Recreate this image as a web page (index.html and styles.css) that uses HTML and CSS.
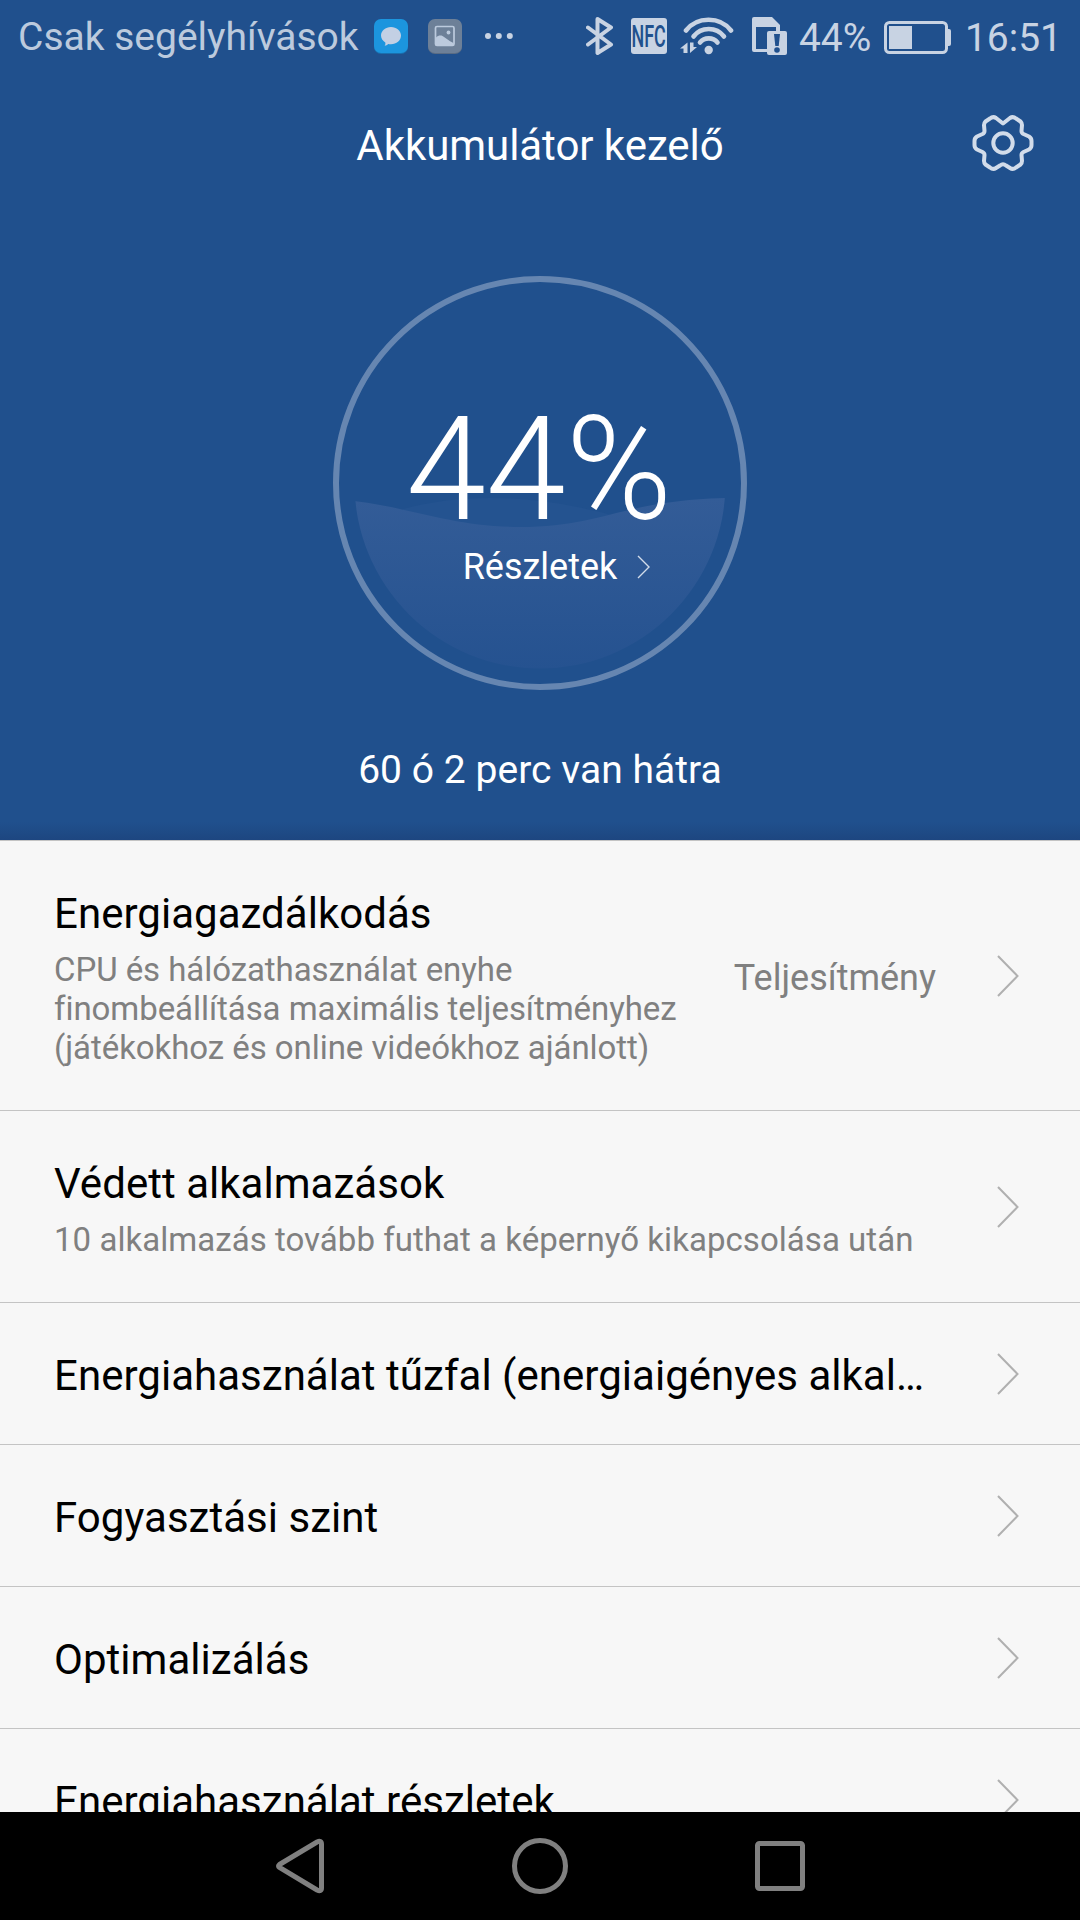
FILE: index.html
```html
<!DOCTYPE html>
<html lang="hu">
<head>
  <meta charset="UTF-8">
  <meta name="viewport" content="width=device-width, initial-scale=1.0">
  <title>Akkumulátor kezelő</title>
  <link rel="stylesheet" href="styles.css">
</head>
<body>
  <section class="top">
    <div class="status">
      <span class="carrier">Csak segélyhívások</span>
      <svg class="ic-app" width="34" height="35" viewBox="0 0 34 35">
        <rect y="1" width="34" height="34" rx="7" fill="#1a6fae"/>
        <rect width="34" height="34" rx="7" fill="#1c95de"/>
        <path d="M17 8c5.500 0 10 3.600 10 8.600s-4.500 8.700-10 8.700c-1 0-2-.1-2.900-.4-.9.900-2 1.600-3.400 1.800.6-.9.900-2.100.6-3.300C8.700 22 7 19.500 7 16.600 7 11.600 11.500 8 17 8z" fill="#c3d0e4"/>
      </svg>
      <svg class="ic-pic" width="34" height="35" viewBox="0 0 34 35">
        <rect y="1" width="34" height="34" rx="7" fill="#5a6c84"/>
        <rect width="34" height="34" rx="7" fill="#6d8098"/>
        <rect x="7.500" y="7.500" width="18.500" height="19" rx="1.500" fill="none" stroke="#bccadd" stroke-width="1.700"/>
        <circle cx="20.500" cy="13.500" r="1.900" fill="#bccadd"/>
        <path d="M8 18.500c2-2 4.500-2.500 6.500-1.500 3 1.600 6 5 11 7V26.500H8z" fill="#bccadd"/>
      </svg>
      <svg class="ic-dots" width="30" height="8" viewBox="0 0 30 8">
        <g fill="#c8d3e3"><circle cx="4" cy="4" r="3"/><circle cx="14.800" cy="4" r="3"/><circle cx="25.800" cy="4" r="3"/></g>
      </svg>
      <span class="spacer"></span>
      <svg class="ic-bt" width="28" height="38" viewBox="0 0 28 38">
        <path d="M2 10.500L25 27.500 11.500 36V2L25 10.500 2 27.500" fill="none" stroke="#c8d3e3" stroke-width="4" stroke-linejoin="round" stroke-linecap="round"/>
      </svg>
      <span class="nfc"><b>NFC</b></span>
      <svg class="ic-wifi" width="54" height="38" viewBox="0 0 54 38">
        <g fill="none" stroke="#c8d3e3" stroke-width="4.600" stroke-linecap="round">
          <path d="M6 13.500C17-.8 40-.8 51 13.500"/>
          <path d="M13.500 19.500C21 9.500 36.500 9.500 44 19.500"/>
          <path d="M20 25.500c4.500-5.500 13-5.500 17.500 0"/>
        </g>
        <circle cx="28.700" cy="33" r="4.200" fill="#c8d3e3"/>
        <path d="M7.500 25.500V36H3.500V31.500H0zM10 25.500h3.500V30H17L10 36z" fill="#c8d3e3"/>
      </svg>
      <svg class="ic-sim" width="35" height="38" viewBox="0 0 35 38">
        <path fill-rule="evenodd" d="M2 0h18l8 8v14H24V10H4v22h12v3H2a2 2 0 0 1-2-2V2a2 2 0 0 1 2-2z" fill="#c8d3e3"/>
        <rect x="15" y="14" width="20" height="24" rx="2" fill="#c8d3e3"/>
        <path d="M22 17h6l-1.300 12h-3.400z" fill="#20508d"/>
        <circle cx="25" cy="33" r="2.800" fill="#20508d"/>
      </svg>
      <span class="level">44%</span>
      <svg class="ic-bat" width="67" height="33" viewBox="0 0 67 33">
        <rect x="1.500" y="1.500" width="61" height="30" rx="4" fill="none" stroke="#c8d3e3" stroke-width="3"/>
        <rect x="5" y="5" width="23" height="23" fill="#c8d3e3"/>
        <path d="M63 8h2a2 2 0 0 1 2 2v13a2 2 0 0 1-2 2h-2z" fill="#c8d3e3"/>
      </svg>
      <span class="clock">16:51</span>
    </div>

    <header class="header">
      <h1>Akkumulátor kezelő</h1>
      <svg class="gear" width="64" height="64" viewBox="0 0 64 64">
        <path d="M32 12.500L39 7Q42 5 45 7.500L49.500 10.500Q51 12 51 14L50.500 20Q50.500 22 52.500 23L58 25.500Q60.500 27 60.500 30V34Q60.500 37 58 38.500L52.500 41Q50.500 42 50.500 44L51 50Q51 52 49.500 53.500L45 56.500Q42 59 39 57L35 54.500Q32 52 29 54.500L25 57Q22 59 19 56.500L14.500 53.500Q13 52 13 50L13.500 44Q13.500 42 11.500 41L6 38.500Q3.500 37 3.500 34V30Q3.500 27 6 25.500L11.500 23Q13.500 22 13.500 20L13 14Q13 12 14.500 10.500L19 7.500Q22 5 25 7Z" fill="none" stroke="#d2dcea" stroke-width="4" stroke-linejoin="round"/>
        <circle cx="32" cy="32" r="9.700" fill="none" stroke="#d2dcea" stroke-width="4"/>
      </svg>
    </header>

    <div class="gauge">
      <svg class="wave" width="414" height="414" viewBox="0 0 414 414">
        <defs>
          <linearGradient id="water" x1="0" y1="0" x2="0" y2="1">
            <stop offset="0" stop-color="#335c97"/>
            <stop offset="1" stop-color="#255290"/>
          </linearGradient>
          <clipPath id="bowl"><circle cx="207" cy="207" r="185.500"/></clipPath>
        </defs>
        <g clip-path="url(#bowl)">
          <path d="M70 233C130 217 200 217 290 242V270H70z" fill="#245390"/>
          <path d="M20 225C80 232 120 251 187 251C270 251 290 224 395 222V395H20z" fill="url(#water)"/>
        </g>
        <circle cx="207" cy="207" r="204" fill="none" stroke="#6686b1" stroke-width="6"/>
      </svg>
      <div class="gauge-text">
        <div class="percent">44%</div>
        <div class="details">
          <span>Részletek</span>
          <svg width="14" height="24" viewBox="0 0 14 24"><path d="M1 1l11 11L1 23" fill="none" stroke="#d2dcea" stroke-width="1.400"/></svg>
        </div>
      </div>
    </div>

    <p class="remaining">60 ó 2 perc van hátra</p>
  </section>

  <main class="list">
    <div class="row">
      <div class="text">
        <h2>Energiagazdálkodás</h2>
        <p class="long">CPU és hálózathasználat enyhe<br>finombeállítása maximális teljesítményhez<br>(játékokhoz és online videókhoz ajánlott)</p>
      </div>
      <span class="value">Teljesítmény</span>
      <svg class="arrow" viewBox="0 0 22 42"><path d="M1 1l19.500 20L1 41"/></svg>
    </div>
    <div class="row">
      <div class="text">
        <h2>Védett alkalmazások</h2>
        <p>10 alkalmazás tovább futhat a képernyő kikapcsolása után</p>
      </div>
      <svg class="arrow" viewBox="0 0 22 42"><path d="M1 1l19.500 20L1 41"/></svg>
    </div>
    <div class="row">
      <div class="text"><h2>Energiahasználat tűzfal (energiaigényes alkal…</h2></div>
      <svg class="arrow" viewBox="0 0 22 42"><path d="M1 1l19.500 20L1 41"/></svg>
    </div>
    <div class="row">
      <div class="text"><h2>Fogyasztási szint</h2></div>
      <svg class="arrow" viewBox="0 0 22 42"><path d="M1 1l19.500 20L1 41"/></svg>
    </div>
    <div class="row">
      <div class="text"><h2>Optimalizálás</h2></div>
      <svg class="arrow" viewBox="0 0 22 42"><path d="M1 1l19.500 20L1 41"/></svg>
    </div>
    <div class="row">
      <div class="text"><h2>Energiahasználat részletek</h2></div>
      <svg class="arrow" viewBox="0 0 22 42"><path d="M1 1l19.500 20L1 41"/></svg>
    </div>
  </main>

  <nav class="navbar">
    <svg width="56" height="60" viewBox="0 0 56 60"><path d="M7.500 28.500L45 6Q49.500 4 49.500 8V52Q49.500 56 45 54L7.500 31.500Q5.500 30 7.500 28.500z"/></svg>
    <svg width="60" height="60" viewBox="0 0 60 60"><circle cx="30" cy="30" r="25.500"/></svg>
    <svg width="56" height="60" viewBox="0 0 56 60"><rect x="5.500" y="7.500" width="45" height="45" rx="2"/></svg>
  </nav>
</body>
</html>
```
FILE: styles.css
```css
* {
  box-sizing: border-box;
}

body {
  font-family: Roboto, "Noto Sans", sans-serif;
  margin: 0;
  height: 1920px;
  display: flex;
  flex-direction: column;
  overflow: hidden;
  background: #f7f7f7;
}

h1, h2, p {
  margin: 0;
  font-weight: 400;
}

svg {
  display: block;
  flex-shrink: 0;
}

.top {
  height: 840px;
  flex-shrink: 0;
  background: linear-gradient(to bottom, #20508d 0, #20508d 822px, #1d4680 840px);
  color: white;
  display: flex;
  flex-direction: column;
  align-items: center;
}

.status {
  width: 100%;
  height: 72px;
  padding: 0 18px;
  display: flex;
  align-items: center;
  color: #c8d3e3;
  font-size: 39px;
  line-height: 72px;
}

.carrier {
  color: #bccadd;
  width: 339px;
  padding-top: 2px;
  white-space: nowrap;
}

.ic-app {
  margin-left: 17px;
}

.ic-pic {
  margin-left: 20px;
}

.ic-dots {
  margin-left: 22px;
}

.spacer {
  flex: 1;
}

.nfc {
  width: 36px;
  height: 36px;
  margin-left: 17px;
  border-radius: 3px;
  background: #c8d3e3;
  color: #20508d;
  font-size: 32px;
  line-height: 37px;
  display: flex;
  justify-content: center;
}

.nfc b {
  font-weight: 500;
  transform: scaleX(0.56);
}

.ic-wifi {
  margin-left: 13px;
}

.ic-sim {
  margin-left: 18px;
}

.level {
  margin-left: 12px;
  width: 72px;
  padding-top: 3px;
}

.ic-bat {
  margin: 3px 0 0 13px;
}

.clock {
  margin-left: 14px;
  padding-top: 3px;
}

.header {
  width: 100%;
  height: 144px;
  display: grid;
  grid-template-columns: 109px 1fr 109px;
  padding-top: 38px;
}

.header h1 {
  grid-column: 2;
  text-align: center;
  font-size: 42px;
  line-height: 72px;
  letter-spacing: -0.05px;
}

.gear {
  margin-top: 0.5px;
}

.gauge {
  width: 414px;
  height: 414px;
  margin-top: 60px;
  display: grid;
}

.wave, .gauge-text {
  grid-area: 1 / 1;
}

.gauge-text {
  display: flex;
  flex-direction: column;
  align-items: center;
  z-index: 1;
}

.percent {
  margin: 134px 2px 0 0;
  font-size: 144px;
  line-height: 120px;
  font-weight: 300;
}

.details {
  display: flex;
  align-items: center;
  gap: 20px;
  margin: 16px 0 0 34px;
  font-size: 36px;
  line-height: 42px;
}

.remaining {
  margin-top: 57px;
  font-size: 39px;
  line-height: 46px;
  letter-spacing: 0.05px;
}

.list {
  flex: 1;
  min-height: 0;
  overflow: hidden;
  background: #f7f7f7;
}

.row {
  display: flex;
  align-items: center;
  border-top: 1px solid #c4c4c4;
  padding: 0 61px 0 54px;
}

.text {
  flex: 1;
  padding: 48px 0 44px;
  white-space: nowrap;
}

.text h2 {
  font-size: 42px;
  line-height: 49px;
  letter-spacing: 0.03px;
  color: black;
}

.text p {
  margin: 12px 0 -1px;
  font-size: 33px;
  line-height: 39px;
  letter-spacing: 0.04px;
  color: #808080;
}

.text .long {
  letter-spacing: -0.06px;
}

.value {
  font-size: 36px;
  line-height: 42px;
  color: #808080;
  margin-right: 61px;
  padding-top: 4px;
}

.arrow {
  width: 22px;
  height: 42px;
  fill: none;
  stroke: #b0b0b0;
  stroke-width: 2;
}

.navbar {
  height: 108px;
  flex-shrink: 0;
  background: black;
  display: flex;
  justify-content: space-between;
  align-items: center;
  padding: 0 272px;
}

.navbar svg {
  fill: none;
  stroke: #808080;
  stroke-width: 5;
}
```
